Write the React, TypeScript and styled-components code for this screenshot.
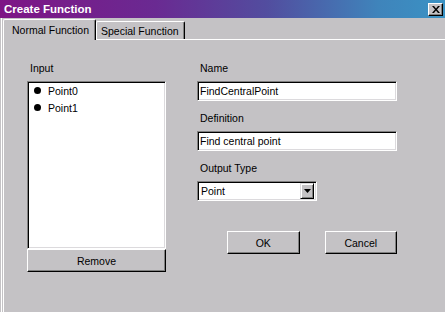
import styled, { createGlobalStyle } from "styled-components";

const FACE = "#c4c2c5";

const GlobalStyle = createGlobalStyle`
  html, body {
    margin: 0;
    padding: 0;
    background: ${FACE};
  }
  body {
    font-family: "Liberation Sans", Arial, sans-serif;
    font-size: 10.5px;
    color: #000;
  }
`;

const INPUTS = ["Point0", "Point1"];

const App = () => {
  return (
    <>
      <GlobalStyle />
      <Window>
        <TitleBar>
          <Title>Create Function</Title>
          <CloseButton>
            <svg width="8" height="7" viewBox="0 0 8 7">
              <path d="M0 0h2l2 2.5L6 0h2L5 3.5 8 7H6L4 4.5 2 7H0l3-3.5z" fill="#000" />
            </svg>
          </CloseButton>
        </TitleBar>

        <Body>
          <TabStrip>
            <Tab $active>Normal Function</Tab>
            <Tab>Special Function</Tab>
          </TabStrip>

          <Panel>
            <LeftColumn>
              <Label>Input</Label>
              <ListBox>
                {INPUTS.map((item) => (
                  <ListItem key={item}>
                    <Bullet />
                    {item}
                  </ListItem>
                ))}
              </ListBox>
              <Button $wide>Remove</Button>
            </LeftColumn>

            <RightColumn>
              <Label>Name</Label>
              <TextField>FindCentralPoint</TextField>
              <Label>Definition</Label>
              <TextField>Find central point</TextField>
              <Label>Output Type</Label>
              <Select>
                <SelectValue>Point</SelectValue>
                <DropButton>
                  <svg width="7" height="4" viewBox="0 0 7 4">
                    <path d="M0 0h7L3.5 4z" fill="#000" />
                  </svg>
                </DropButton>
              </Select>
              <ButtonRow>
                <Button>OK</Button>
                <Button>Cancel</Button>
              </ButtonRow>
            </RightColumn>
          </Panel>
        </Body>
      </Window>
    </>
  );
};

const Window = styled.div`
  width: 445px;
  height: 312px;
  display: flex;
  flex-direction: column;
  overflow: hidden;
  background: ${FACE};
`;

const TitleBar = styled.div`
  height: 18px;
  flex: none;
  display: flex;
  align-items: center;
  justify-content: space-between;
  padding: 0 2px 0 4px;
  background: linear-gradient(90deg, #7e1585 0%, #6a2a92 35%, #524d9f 60%, #3f84bb 85%, #3a92c4 100%);
`;

const Title = styled.span`
  color: #fff;
  font-weight: 700;
  font-size: 11.5px;
  line-height: 18px;
`;

const CloseButton = styled.div`
  width: 15px;
  height: 13px;
  box-sizing: border-box;
  display: flex;
  align-items: center;
  justify-content: center;
  background: ${FACE};
  border-top: 1px solid #fff;
  border-left: 1px solid #fff;
  border-right: 1px solid #000;
  border-bottom: 1px solid #000;
  box-shadow: inset -1px -1px #808080;
`;

const Body = styled.div`
  flex: 1;
  display: flex;
  flex-direction: column;
  padding-left: 3px;
  box-shadow: inset 1px 0 ${FACE}, inset 2px 0 #fff;
`;

const TabStrip = styled.div`
  height: 21px;
  display: flex;
  align-items: flex-start;
  padding-top: 1px;
  position: relative;
  z-index: 1;
`;

const Tab = styled.div<{ $active?: boolean }>`
  box-sizing: border-box;
  width: ${(p) => (p.$active ? "93px" : "89px")};
  height: ${(p) => (p.$active ? "21px" : "18px")};
  margin-top: ${(p) => (p.$active ? "0" : "2px")};
  padding: ${(p) => (p.$active ? "3px 0 0 8px" : "2px 0 0 4px")};
  background: ${FACE};
  border-top: 1px solid #fff;
  border-left: 1px solid #fff;
  border-right: 1px solid #000;
  border-radius: 2px 2px 0 0;
  box-shadow: inset -1px 0 #808080;
  line-height: 14px;
  white-space: nowrap;
`;

const Panel = styled.div`
  flex: 1;
  display: flex;
  padding: 21px 0 0 23px;
  border-top: 1px solid #fff;
  border-left: 1px solid #fff;
  margin-top: -1px;
`;

const LeftColumn = styled.div`
  width: 139px;
  display: flex;
  flex-direction: column;
`;

const RightColumn = styled.div`
  width: 200px;
  margin-left: 31px;
  display: flex;
  flex-direction: column;
`;

const Label = styled.div`
  line-height: 14px;
  height: 14px;
  padding-left: 3px;
  margin-bottom: 6px;
`;

const sunken = `
  box-sizing: border-box;
  background: #fff;
  border-top: 1px solid #808080;
  border-left: 1px solid #808080;
  border-right: 1px solid #fff;
  border-bottom: 1px solid #fff;
  box-shadow: inset 1px 1px #000, inset -1px -1px #dcdadd;
`;

const ListBox = styled.div`
  ${sunken}
  height: 168px;
  padding: 0 0 0 6px;
`;

const ListItem = styled.div`
  display: flex;
  align-items: center;
  gap: 7px;
  height: 17px;
`;

const Bullet = styled.span`
  width: 7px;
  height: 7px;
  border-radius: 50%;
  background: #000;
`;

const TextField = styled.div`
  ${sunken}
  height: 20px;
  padding: 0 2px;
  line-height: 19px;
  margin-bottom: 10px;
`;

const Select = styled.div`
  ${sunken}
  width: 120px;
  height: 20px;
  display: flex;
  align-items: center;
  padding: 2px 2px 2px 3px;
`;

const SelectValue = styled.span`
  flex: 1;
  line-height: 16px;
`;

const DropButton = styled.div`
  width: 14px;
  height: 16px;
  box-sizing: border-box;
  display: flex;
  align-items: center;
  justify-content: center;
  background: ${FACE};
  border-top: 1px solid #dcdadd;
  border-left: 1px solid #dcdadd;
  border-right: 1px solid #000;
  border-bottom: 1px solid #000;
  box-shadow: inset 1px 1px #fff, inset -1px -1px #808080;
`;

const ButtonRow = styled.div`
  display: flex;
  gap: 25px;
  margin: 30px 0 0 30px;
`;

const Button = styled.div<{ $wide?: boolean }>`
  box-sizing: border-box;
  width: ${(p) => (p.$wide ? "139px" : "75px")};
  height: 23px;
  display: flex;
  align-items: center;
  justify-content: center;
  background: ${FACE};
  border-top: 1px solid #fff;
  border-left: 1px solid #fff;
  border-right: 1px solid #000;
  border-bottom: 1px solid #000;
  box-shadow: inset -1px -1px #808080;
`;

export default App;
